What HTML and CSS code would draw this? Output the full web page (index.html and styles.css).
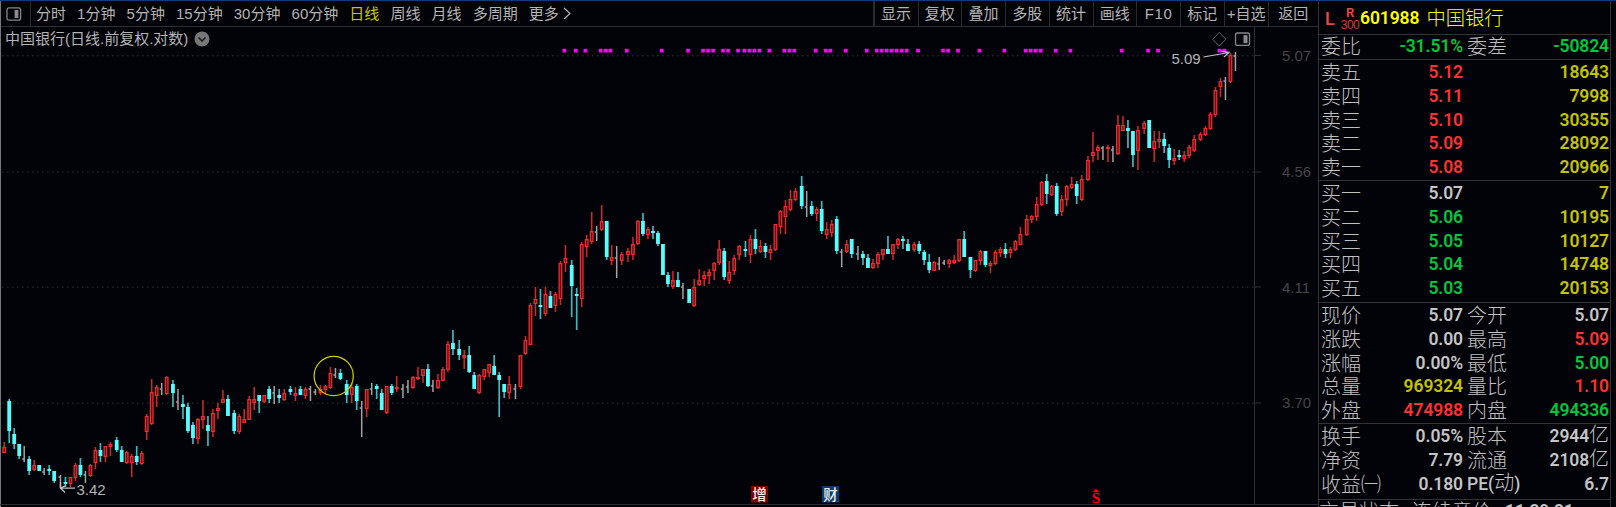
FILE: index.html
```html
<!DOCTYPE html>
<html lang="zh-CN">
<head>
  <meta charset="UTF-8" />
  <meta name="viewport" content="width=device-width, initial-scale=1.0" />
  <title>中国银行 601988</title>
  <link rel="stylesheet" href="styles.css">
</head>
<body>
  <div class="app">
    <div class="main">
      <!-- Toolbar -->
      <div class="toolbar">
        <div class="toggle">
          <svg width="16" height="14" viewBox="0 0 16 14">
            <rect class="icon-frame" x="1" y="0.8" width="13.6" height="12.4" rx="2"></rect>
            <rect class="icon-fill" x="8.6" y="3" width="3.8" height="8"></rect>
          </svg>
        </div>
        <div class="periods">
          <span>分时</span>
          <span>1分钟</span>
          <span>5分钟</span>
          <span>15分钟</span>
          <span>30分钟</span>
          <span>60分钟</span>
          <span class="active">日线</span>
          <span>周线</span>
          <span>月线</span>
          <span>多周期</span>
          <span class="more">更多
            <svg width="9" height="13" viewBox="0 0 9 13"><path class="icon-line" d="M1 1 L7 6.5 L1 12"></path></svg>
          </span>
        </div>
        <div class="tools">
          <span>显示</span>
          <span>复权</span>
          <span>叠加</span>
          <span>多股</span>
          <span>统计</span>
          <span>画线</span>
          <span class="f10">F10</span>
          <span>标记</span>
          <span>+自选</span>
          <span>返回</span>
        </div>
      </div>

      <!-- Chart -->
      <div class="chart">
        <div class="chart-title">
          <span>中国银行(日线.前复权.对数)</span>
          <svg width="16" height="16" viewBox="0 0 16 16">
            <circle cx="8" cy="8" r="7.5"></circle>
            <path d="M4.5 6.5 L8 10 L11.5 6.5"></path>
          </svg>
        </div>
        <svg class="plot" width="1318" height="480" viewBox="0 27 1318 480">
          <g class="grid">
            <path d="M2 55.5H1254M2 172H1254M2 287H1254M2 403H1254"></path>
          </g>
          <g class="frame">
            <path d="M1254.5 27V504M1255 55.5H1261M1255 172H1261M1255 287H1261M1255 403H1261M0 504.5H1318"></path>
          </g>
          <g class="axis">
            <text x="1282" y="61">5.07</text>
            <text x="1282" y="177">4.56</text>
            <text x="1282" y="292.5">4.11</text>
            <text x="1282" y="408">3.70</text>
          </g>
          <g id="dots"></g>
          <g id="candles"></g>
          <circle class="mark" cx="333.7" cy="376" r="19.6"></circle>
          <g class="note">
            <text x="76.5" y="494.5">3.42</text>
            <path d="M75 488H60.5M60.5 482V489M60.5 488L65 492.5M60.5 488L66 485.5"></path>
            <text x="1171.5" y="63.5">5.09</text>
            <path d="M1203.5 57L1229 52.5M1221 51L1229 52.5L1224 57"></path>
          </g>
          <path class="diamond" d="M1219.3 32.5L1226 39.2L1219.3 46L1212.6 39.2Z"></path>
          <rect class="icon-frame" x="1235.5" y="33" width="14" height="12.4" rx="2"></rect>
          <rect class="icon-fill" x="1243.5" y="35.2" width="4" height="8"></rect>
          <g class="badge">
            <rect class="red" x="751" y="486" width="17" height="16.5"></rect>
            <text x="759.5" y="499.7">增</text>
            <rect class="blue" x="822" y="486" width="17" height="16.5"></rect>
            <text x="830.5" y="499.7">财</text>
          </g>
          <g class="dividend">
            <path d="M1092.5 492.3L1096 488.7L1099.5 492.3Z"></path>
            <text x="1096" y="502.7">S</text>
          </g>
        </svg>
      </div>
    </div>

    <!-- Quote panel -->
    <div class="panel">
      <div class="stock">
        <span class="flag-l">L</span>
        <span class="flag-r"><b>R</b><i>300</i></span>
        <span class="code">601988</span>
        <span class="name">中国银行</span>
      </div>
      <div class="block ratio">
        <div class="row"><div>委比<b class="down">-31.51%</b></div><div>委差<b class="down">-50824</b></div></div>
      </div>
      <div class="block asks">
        <div class="row"><div>卖五<b class="up">5.12</b></div><div><b class="vol">18643</b></div></div>
        <div class="row"><div>卖四<b class="up">5.11</b></div><div><b class="vol">7998</b></div></div>
        <div class="row"><div>卖三<b class="up">5.10</b></div><div><b class="vol">30355</b></div></div>
        <div class="row"><div>卖二<b class="up">5.09</b></div><div><b class="vol">28092</b></div></div>
        <div class="row"><div>卖一<b class="up">5.08</b></div><div><b class="vol">20966</b></div></div>
      </div>
      <div class="block bids">
        <div class="row"><div>买一<b>5.07</b></div><div><b class="vol">7</b></div></div>
        <div class="row"><div>买二<b class="down">5.06</b></div><div><b class="vol">10195</b></div></div>
        <div class="row"><div>买三<b class="down">5.05</b></div><div><b class="vol">10127</b></div></div>
        <div class="row"><div>买四<b class="down">5.04</b></div><div><b class="vol">14748</b></div></div>
        <div class="row"><div>买五<b class="down">5.03</b></div><div><b class="vol">20153</b></div></div>
      </div>
      <div class="block quote">
        <div class="row"><div>现价<b>5.07</b></div><div>今开<b>5.07</b></div></div>
        <div class="row"><div>涨跌<b>0.00</b></div><div>最高<b class="up">5.09</b></div></div>
        <div class="row"><div>涨幅<b>0.00%</b></div><div>最低<b class="down">5.00</b></div></div>
        <div class="row"><div>总量<b class="vol">969324</b></div><div>量比<b class="up">1.10</b></div></div>
        <div class="row"><div>外盘<b class="up">474988</b></div><div>内盘<b class="down">494336</b></div></div>
      </div>
      <div class="block basics">
        <div class="row"><div>换手<b>0.05%</b></div><div>股本<b>2944<em>亿</em></b></div></div>
        <div class="row"><div>净资<b>7.79</b></div><div>流通<b>2108<em>亿</em></b></div></div>
        <div class="row"><div>收益㈠<b>0.180</b></div><div><span class="pe">PE(<em>动</em>)</span><b>6.7</b></div></div>
      </div>
      <div class="status"><span>交易状态</span><span>连续竞价</span><b>11:29:21</b></div>
    </div>
  </div>
  <script src="chart.js"></script>
</body>
</html>
```
FILE: styles.css
```css
* {
  box-sizing: border-box;
}
body {
  margin: 0;
  background: #020209;
  color: #b4b4b4;
  font-family: "Liberation Sans", "Noto Sans CJK SC", sans-serif;
  font-size: 15px;
  overflow: hidden;
}
.app {
  display: flex;
  width: 1616px;
  height: 507px;
  border-top: 1px solid #17396e;
  overflow: hidden;
}
.main {
  width: 1318px;
  border-left: 1px solid #77777a;
}

/* Toolbar */
.toolbar {
  display: flex;
  height: 26px;
  border-bottom: 1px solid #2e2e30;
  line-height: 25px;
  white-space: nowrap;
}
.toggle {
  display: flex;
  align-items: center;
  width: 30px;
  padding-left: 5px;
  border-right: 1px solid #2a2a2c;
}
.icon-frame {
  fill: none;
  stroke: #85858a;
  stroke-width: 1.3;
}
.icon-fill {
  fill: #8c8c90;
}
.icon-line {
  fill: none;
  stroke: #b4b4b4;
  stroke-width: 1.2;
}
.periods {
  display: flex;
  flex: 1;
  gap: 11.1px;
  padding-left: 5px;
}
.periods .active {
  color: #c8c800;
}
.more {
  display: flex;
  align-items: center;
  gap: 4px;
}
.tools {
  display: flex;
  border-left: 2px solid #2a2a2c;
}
.tools span {
  width: 43.75px;
  border-right: 1px solid #2a2a2c;
  text-align: center;
}
.tools .f10 {
  letter-spacing: 0.6px;
}
.tools span:last-child {
  width: 49.5px;
  border-right: none;
}

/* Chart */
.chart {
  position: relative;
}
.chart-title {
  position: absolute;
  top: 3px;
  left: 4px;
  display: flex;
  align-items: center;
  gap: 6px;
  line-height: 18px;
}
.chart-title circle {
  fill: #77777a;
}
.chart-title path {
  fill: none;
  stroke: #16161c;
  stroke-width: 1.5;
}
.plot {
  display: block;
  margin-left: -1px;
}
.grid path {
  stroke: #242429;
  stroke-width: 1.25;
  stroke-dasharray: 1.6 3.4;
}
.frame path {
  fill: none;
  stroke: #2e2e31;
}
.axis text {
  fill: #454547;
}
.up-bar {
  fill: #5c1218;
  stroke: #f02c2e;
  stroke-width: 1.25;
}
.up-wick {
  stroke: #d8272b;
  stroke-width: 1.5;
}
.down-bar {
  fill: #54ffff;
}
.down-wick {
  stroke: #3cb9bd;
  stroke-width: 1.7;
}
.flat {
  stroke: #a4a4a6;
  stroke-width: 1.5;
}
.dot {
  fill: #ff00ff;
}
.mark {
  fill: none;
  stroke: #cccc00;
  stroke-width: 1.25;
}
.note text {
  fill: #b4b4b4;
}
.note path {
  fill: none;
  stroke: #c0c0c0;
  stroke-width: 1.25;
}
.diamond {
  fill: none;
  stroke: #68686b;
}
.badge .red {
  fill: #7d0000;
}
.badge .blue {
  fill: #0c3a69;
}
.badge text {
  fill: #f0f0f0;
  font-size: 14.5px;
  font-weight: 500;
  text-anchor: middle;
}
.dividend path {
  fill: #ff0000;
}
.dividend text {
  fill: #ff0000;
  font-family: "Liberation Serif", serif;
  font-size: 15px;
  font-weight: bold;
  text-anchor: middle;
}

/* Quote panel */
.panel {
  width: 293px;
  border-left: 1px solid #333336;
  border-right: 1px solid #333336;
  color: #c0c0c0;
  font-family: "Noto Sans CJK SC", sans-serif;
  font-size: 20px;
  font-weight: 300;
  white-space: nowrap;
}
.panel b {
  color: #c4c4c4;
  font-family: Roboto, sans-serif;
  font-size: 17.5px;
  font-weight: 600;
  letter-spacing: -0.1px;
}
.panel em {
  font-family: "Noto Sans CJK SC", sans-serif;
  font-size: 20px;
  font-style: normal;
  font-weight: 300;
  line-height: 0;
}
.stock {
  display: flex;
  align-items: center;
  height: 33px;
  padding-left: 6px;
  color: #ffff00;
}
.stock .flag-l {
  width: 15px;
  padding-top: 2px;
  color: #f04444;
  font-family: Roboto, sans-serif;
  font-size: 18px;
  font-weight: 500;
}
.stock .flag-r {
  display: flex;
  flex-direction: column;
  align-items: center;
  width: 20px;
  padding-top: 2px;
  line-height: 13px;
}
.stock .flag-r b {
  color: #f04444;
  font-size: 13px;
}
.stock .flag-r i {
  color: #d83a3a;
  font-family: "Liberation Sans", sans-serif;
  font-size: 12px;
  font-style: normal;
  letter-spacing: -0.5px;
}
.stock .code {
  font-family: Roboto, sans-serif;
  font-size: 17.5px;
  font-weight: 600;
  letter-spacing: -0.1px;
}
.stock .name {
  margin-top: -2px;
  padding-left: 7px;
  font-size: 19.3px;
}
.block {
  border-top: 1px solid #333336;
  padding-left: 2px;
}
.row {
  display: grid;
  grid-template-columns: 142px 142px;
  column-gap: 4px;
  height: 23.75px;
  line-height: 22.4px;
}
.row div {
  display: flex;
  justify-content: space-between;
}
.row b {
  margin-left: auto;
}
.row .up {
  color: #ff3030;
}
.row .down {
  color: #00c83c;
}
.row .vol {
  color: #c3c300;
}
.row .pe {
  color: #c4c4c4;
  font-family: Roboto, sans-serif;
  font-size: 17.5px;
  font-weight: 500;
}
.ratio {
  height: 25px;
}
.asks {
  height: 121px;
  padding-top: 1px;
}
.bids {
  height: 122px;
  padding-top: 1px;
}
.quote {
  height: 121px;
  padding-top: 1px;
}
.basics {
  height: 76px;
  padding-top: 1px;
}
.status {
  display: flex;
  gap: 13px;
  border-top: 1px solid #333336;
  line-height: 22px;
}
```
FILE: chart.js
```js
// [high, low, open/close top, open/close bottom, type]   r = up, c = down
// [high, low, tick] = flat day
const candles = [
  [442,453,447,453,"r"],[399,443,401,431,"c"],[428,449,434,444,"c"],[444,459,444,456,"c"],[446,462,459],
  [456,475,459,471,"c"],[460,471,465,470,"r"],[465,471,465,471,"c"],[468,475,472],[465,475,469,471,"c"],
  [471,483,471,481,"c"],[475,488,477],[477,487,482,484,"c"],[477,487,477,484,"r"],[463,481,465,478,"r"],
  [458,477,465,475,"c"],[471,483,475],[464,477,465,476,"r"],[447,469,450,463,"r"],[443,462,450,456,"c"],
  [446,462,446,457,"r"],[442,456,444,447,"r"],[437,452,440,450,"c"],[446,462,450,462,"c"],[451,464,452,463,"r"],
  [454,477,456,463,"r"],[446,465,456,462,"c"],[451,465,453,464,"r"],[414,440,416,432,"r"],[379,425,392,424,"r"],
  [385,407,387,396,"r"],[383,395,389],[376,395,377,394,"r"],[380,407,384,393,"c"],[389,410,402],
  [395,419,404,407,"c"],[403,433,407,431,"c"],[422,444,425,438,"c"],[418,444,419,439,"r"],[400,429,416,420,"r"],
  [416,446,425,431,"c"],[409,437,413,432,"r"],[403,419,408,411,"r"],[390,403,399,403,"r"],[395,416,399,416,"c"],
  [410,434,413,431,"c"],[414,434,416,432,"r"],[409,423,419,423,"r"],[396,420,399,420,"r"],[387,410,399,403,"r"],
  [395,413,395,401,"c"],[395,403,395,402,"r"],[386,403,389,399,"c"],[386,404,393],[389,403,395,398,"c"],
  [389,401,393,400,"r"],[386,395,389,392,"c"],[387,401,393,396,"r"],[386,395,389,395,"c"],[387,399,389,396,"r"],
  [386,401,389],[389,395,392],[385,395,389,393,"r"],[385,394,386,390,"r"],[367,389,373,388,"r"],
  [368,378,375],[369,380,373,379,"c"],[380,403,384,395,"c"],[383,403,387,395,"r"],[384,410,386,401,"c"],
  [401,437,408],[389,417,389,409,"r"],[383,395,389],[384,399,386,389,"c"],[389,410,393,410,"c"],
  [386,414,386,413,"r"],[384,395,386,393,"c"],[376,392,387,389,"r"],[384,398,389],[380,393,387],
  [376,389,377,388,"r"],[367,380,377,379,"r"],[369,383,369,376,"r"],[364,387,369,386,"c"],[380,392,386],
  [374,389,380,388,"r"],[367,381,369,381,"r"],[341,372,344,370,"r"],[330,355,343,349,"c"],[340,360,349,355,"c"],
  [350,369,355,358,"r"],[346,373,355,372,"c"],[372,389,375,389,"c"],[374,394,375,393,"r"],[369,380,369,377,"r"],
  [364,377,364,373,"r"],[355,375,366,375,"c"],[372,417,375,380,"c"],[384,398,384,392,"c"],[376,399,384,393,"r"],
  [384,399,389],[355,389,355,387,"r"],[336,355,340,354,"r"],[303,345,305,345,"r"],[287,316,299,304,"r"],
  [289,319,305,307,"c"],[287,316,294,314,"r"],[291,308,296,308,"c"],[292,312,294,306,"r"],[261,305,263,299,"r"],
  [245,272,258,263,"r"],[260,317,265,286,"c"],[288,330,294,296,"c"],[242,307,244,299,"r"],[235,257,239,247,"r"],
  [212,244,231,242,"r"],[226,241,232],[205,231,221,230,"r"],[221,260,221,257,"c"],[245,265,257,261,"r"],
  [246,278,258],[252,265,254,261,"r"],[248,262,251,255,"r"],[237,260,244,255,"r"],[220,245,221,244,"r"],
  [213,236,221,234,"c"],[227,239,229,235,"r"],[226,239,231,233,"c"],[231,246,233,244,"c"],[244,275,244,275,"c"],
  [272,287,275,284,"c"],[271,289,280,287,"r"],[272,287,280,287,"c"],[283,299,287],[289,303,289,303,"c"],
  [279,307,287,306,"r"],[269,286,280,285,"r"],[271,286,275,279,"r"],[269,284,272,276,"r"],[262,280,263,271,"r"],
  [240,265,249,263,"r"],[248,280,251,277,"c"],[261,284,272,281,"r"],[255,275,258,271,"r"],[245,260,246,255,"r"],
  [241,257,249,251,"c"],[235,263,239,255,"r"],[229,254,239,249,"c"],[240,253,246,252,"r"],[243,258,246,252,"c"],
  [245,260,249,253,"r"],[224,251,224,250,"r"],[210,234,211,227,"r"],[200,234,206,217,"r"],[190,211,199,210,"r"],
  [188,201,191,200,"r"],[176,209,186,206,"c"],[191,217,207],[201,216,206,214,"c"],[207,221,209,214,"r"],
  [201,234,209,231,"c"],[222,239,229,235,"r"],[220,237,224,233,"r"],[216,254,219,251,"c"],[249,267,252],
  [240,253,244,252,"r"],[239,258,239,254,"c"],[246,260,254],[251,265,254,258,"c"],[254,268,258,268,"c"],
  [259,269,263,268,"r"],[252,268,254,264,"r"],[249,260,249,255,"r"],[236,254,249,254,"c"],[244,260,244,254,"r"],
  [238,249,239,245,"r"],[236,249,239,241,"c"],[239,251,244,251,"c"],[242,252,244,250,"r"],[241,254,244,251,"c"],
  [250,265,252,260,"c"],[254,273,262,270,"c"],[261,271,262,271,"r"],[257,270,264],[260,265,263],
  [259,268,260,264,"r"],[255,264,260,263,"r"],[239,262,239,261,"r"],[231,257,239,257,"c"],[257,278,257,270,"c"],
  [260,272,260,271,"r"],[250,265,251,261,"r"],[251,267,251,265,"c"],[261,273,263,266,"r"],[250,265,252,264,"r"],
  [247,257,249,253,"r"],[243,258,249,254,"c"],[247,258,249,253,"r"],[240,251,241,250,"r"],[227,245,234,245,"r"],
  [215,236,219,235,"r"],[215,223,216,220,"r"],[197,221,204,217,"r"],[181,206,182,205,"r"],[174,204,181,194,"c"],
  [185,196,186,195,"r"],[183,216,186,214,"c"],[195,216,199,212,"r"],[185,206,186,200,"r"],[177,189,184,188,"r"],
  [181,204,184,196,"c"],[175,201,179,200,"r"],[156,181,160,180,"r"],[132,162,152,156,"r"],[145,160,147,151,"r"],
  [146,160,148],[145,162,147,149,"r"],[146,162,150],[115,155,125,154,"r"],[116,131,125,131,"r"],
  [120,148,128,131,"c"],[131,167,131,155,"c"],[126,170,130,151,"r"],[121,134,123,129,"r"],[120,148,120,148,"c"],
  [131,162,141,149,"r"],[131,148,139,142,"r"],[133,153,139,146,"c"],[144,168,148,160,"c"],[149,165,158,161,"r"],
  [150,160,155,157,"c"],[151,162,155,159,"r"],[145,158,147,156,"r"],[135,152,139,151,"r"],[132,141,134,140,"r"],
  [126,136,128,135,"r"],[112,130,114,129,"r"],[87,117,90,115,"r"],[78,97,81,87,"r"],[77,100,81],
  [53,83,55,82,"r"],[52,71,56]
];

const dots = [
  564.3, 575.7, 585.3, 600.7, 605.7, 610.3, 626.7, 661.7, 688, 703, 708, 713, 723, 728, 738,
  744.3, 749.3, 754.3, 759.3, 769.3, 784.3, 789.3, 794.3, 815.7, 825.7, 830.3, 845.7, 866.7,
  876.7, 881.7, 886.7, 891.7, 896.7, 901.7, 906.7, 918, 943, 948, 958, 979.3, 1004.3, 1025.7,
  1030.7, 1035.7, 1040.7, 1055.7, 1070.3, 1121.7, 1148, 1158, 1219.3, 1224.3
];

// every 11th bar or so is one step further away
function barX(i) {
  return 4.2 + i * 5 + 1.25 * Math.floor((i + 0.5) / 11.133);
}

function line(cls, x, y1, y2) {
  return `<path class="${cls}" d="M${x} ${y1}V${y2}"></path>`;
}

let out = "";
candles.forEach((c, i) => {
  const x = barX(i);
  if (c.length === 3) {
    out += line("flat", x, c[0], c[1]);
    out += `<path class="flat" d="M${x - 2} ${c[2]}H${x}"></path>`;
  } else if (c[4] === "c") {
    out += line("down-wick", x, c[0], c[1]);
    out += `<rect class="down-bar" x="${x - 1.9}" y="${c[2]}" width="3.8" height="${c[3] - c[2]}"></rect>`;
  } else {
    const h = Math.max(c[3] - c[2] - 1.2, 1);
    out += line("up-wick", x, c[0], c[2]) + line("up-wick", x, c[3], c[1]);
    out += `<rect class="up-bar" x="${x - 1.3}" y="${c[2] + 0.6}" width="2.6" height="${h}"></rect>`;
  }
});
document.getElementById("candles").innerHTML = out;

document.getElementById("dots").innerHTML = dots
  .map(x => `<rect class="dot" x="${x - 1.8}" y="48.8" width="3.7" height="3.7"></rect>`)
  .join("");
```
